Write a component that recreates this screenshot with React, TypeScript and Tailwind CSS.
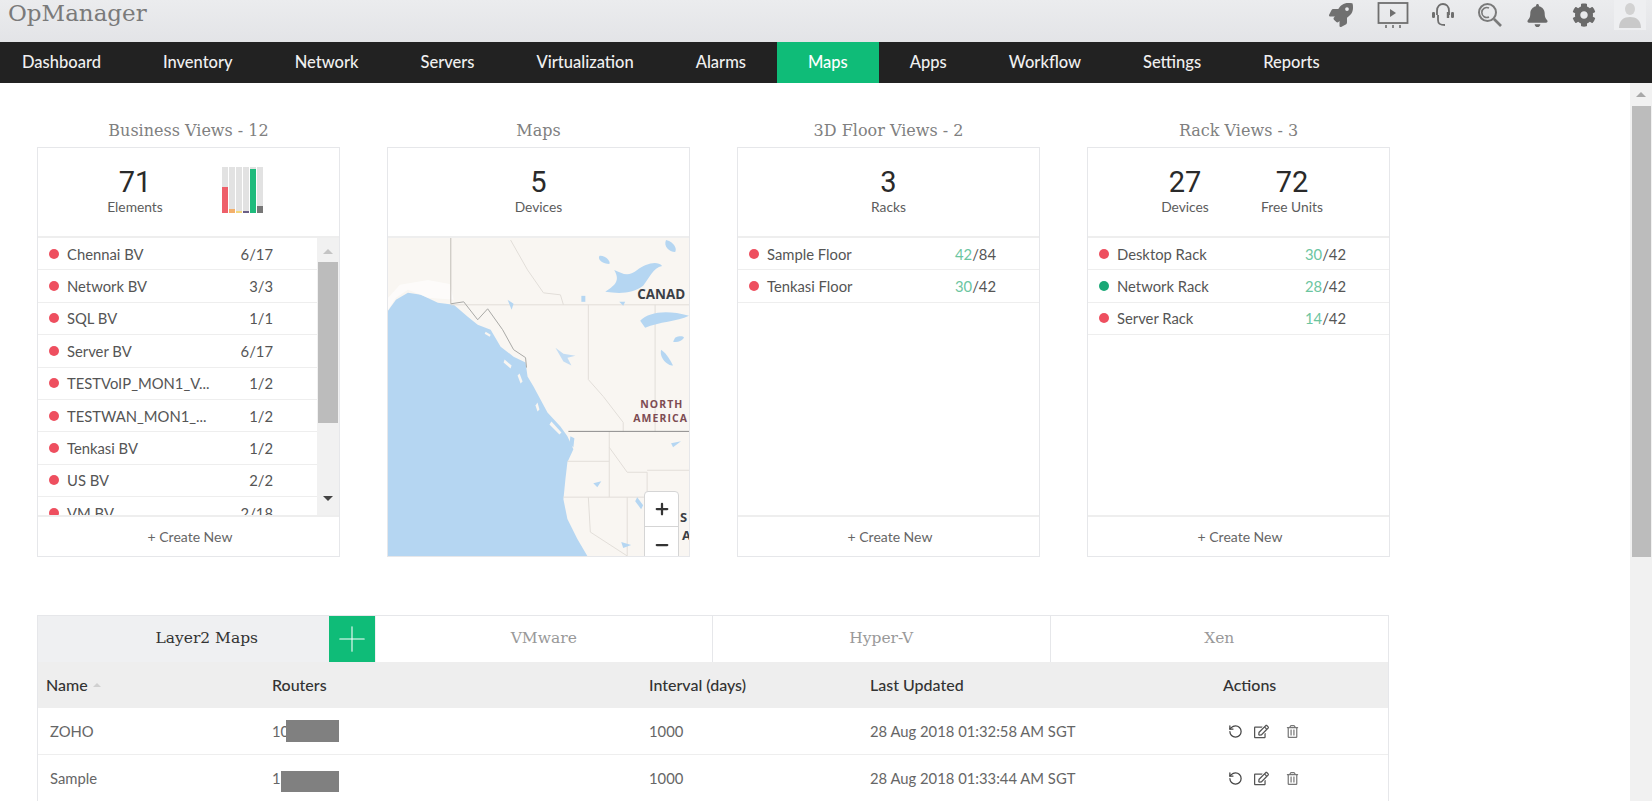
import { Minus, Plus, RotateCcw } from 'lucide-react';
import { FaBell, FaCog, FaRegEdit, FaRegTrashAlt, FaRocket } from 'react-icons/fa';

const navItems = ['Dashboard', 'Inventory', 'Network', 'Servers', 'Virtualization', 'Alarms', 'Maps', 'Apps', 'Workflow', 'Settings', 'Reports'];

const businessViews = [
  { name: 'Chennai BV', count: '6/17' },
  { name: 'Network BV', count: '3/3' },
  { name: 'SQL BV', count: '1/1' },
  { name: 'Server BV', count: '6/17' },
  { name: 'TESTVoIP_MON1_V...', count: '1/2' },
  { name: 'TESTWAN_MON1_...', count: '1/2' },
  { name: 'Tenkasi BV', count: '1/2' },
  { name: 'US BV', count: '2/2' },
  { name: 'VM BV', count: '2/18' },
];

const floorViews = [
  { name: 'Sample Floor', used: '42', total: '/84', ok: false },
  { name: 'Tenkasi Floor', used: '30', total: '/42', ok: false },
];

const rackViews = [
  { name: 'Desktop Rack', used: '30', total: '/42', ok: false },
  { name: 'Network Rack', used: '28', total: '/42', ok: true },
  { name: 'Server Rack', used: '14', total: '/42', ok: false },
];

const layerMaps = [
  { name: 'ZOHO', router: '10', mask: 'w-[53px] left-[14px] top-[12px] h-[22px]', updated: '28 Aug 2018 01:32:58 AM SGT' },
  { name: 'Sample', router: '1', mask: 'w-[58px] left-[9px] top-[16px] h-[21px]', updated: '28 Aug 2018 01:33:44 AM SGT' },
];

const chartBars = [
  { fill: 'h-[26px] bg-[#ee5f6a]' },
  { fill: 'h-[4px] bg-[#f3b06b]' },
  { fill: 'h-[2px] bg-[#f2d77e]' },
  { fill: 'h-[2px] bg-[#6b5f86]' },
  { fill: 'h-[44px] bg-[#1fbb7c]' },
  { fill: 'h-[7px] bg-[#777777]' },
];

function Stat({ value, label }: { value: string; label: string }) {
  return (
    <div className="w-[107px] flex flex-col items-center">
      <span className="font-['Roboto'] text-[29px] leading-[36px] text-[#2a2a2a]">{value}</span>
      <span className="text-[13.8px] leading-[18px] text-[#5c5c5c] -mt-[2px]">{label}</span>
    </div>
  );
}

function Card({ title, stats, children }: { title: string; stats: React.ReactNode; children: React.ReactNode }) {
  return (
    <div>
      <h3 className="h-[28px] mb-[3px] pt-[2px] flex items-center justify-center font-['DejaVu_Serif'] text-[16px] text-[#808080]">{title}</h3>
      <div className="h-[410px] border border-[#e6e7ea] flex flex-col">
        <div className="h-[90px] shrink-0 flex items-start justify-center pt-[16px] border-b-2 border-[#eeeeee]">{stats}</div>
        {children}
      </div>
    </div>
  );
}

function Footer() {
  return (
    <div className="h-[41px] shrink-0 border-t-2 border-[#eeeeee] flex items-center justify-center pl-[3px] text-[14px] text-[#666]">+ Create New</div>
  );
}

function RatioList({ rows }: { rows: { name: string; used: string; total: string; ok: boolean }[] }) {
  return (
    <div className="flex-1">
      {rows.map((row) => (
        <div key={row.name} className="h-[32.4px] flex items-center pl-[11px] pr-[43px] border-b border-[#eeeeee] text-[14.8px] text-[#555]">
          <span className={`w-[10px] h-[10px] rounded-full ${row.ok ? 'bg-[#1aa876]' : 'bg-[#ee4f5f]'}`} />
          <span className="ml-[8px] flex-1">{row.name}</span>
          <span>
            <span className="text-[#6cc5a0]">{row.used}</span>
            {row.total}
          </span>
        </div>
      ))}
    </div>
  );
}

function MapPanel() {
  return (
    <div className="relative flex-1 overflow-hidden bg-[#f9f6f2]">
      <svg viewBox="0 0 302 319" className="w-full h-full block" fill="none">
        {/* ocean */}
        <path
          fill="#b5d6f2"
          d="M0 73 L8 62 L20 55 L33 57 L50 65 L66 67 L80 79 L90 87 L103 92 L113 109 L126 119 L138 125 L140 139 L146 149 L153 162 L160 175 L173 189 L180 199 L186 212 L180 225 L178 242 L176 262 L180 282 L190 302 L200 319 L0 319 Z"
        />
        <path fill="#ffffff" d="M0 60 L12 47 L40 42 L62 46 L66 62 L40 60 L20 52 L8 60 L0 72 Z" opacity="0.6" />
        {/* land borders */}
        <g stroke="#e2ded9" strokeWidth="1">
          <path d="M63 67 L302 67" />
          <path d="M123 2 L140 32 L156 55 L173 57 L176 67" />
          <path d="M201 67 L201 142 L216 159 L236 185 L236 194" />
          <path d="M268 67 L268 194" />
          <path d="M222 194 L222 260 M180 224 L222 224 M222 210 L240 235 L260 235 L260 262 M260 233 L302 233" />
          <path d="M176 260 L260 260 M201 260 L203 295 L240 319 M240 260 L240 319" />
        </g>
        <path d="M63 0 L63 66" stroke="#c2beb8" strokeWidth="1" />
        <path d="M63 66 L76 64 L90 82 L100 71 L115 92 L126 112 L138 120 L139 130" stroke="#a9a9a6" strokeWidth="1" />
        <path d="M181 194 L302 194" stroke="#8b8b8b" strokeWidth="1" />
        {/* coast islands */}
        <g fill="#f9f6f2">
          <path d="M98 94 L103 97 L102 99 L97 96 Z" />
          <path d="M117 122 L124 128 L123 131 L116 125 Z" />
          <path d="M132 136 L135 144 L133 146 L130 138 Z" />
          <path d="M150 165 L152 172 L150 174 L148 168 Z" />
          <path d="M164 184 L174 195 L172 197 L162 187 Z" />
          <path d="M183 199 L187 201 L186 210 L182 207 Z" fill="#b5d6f2" />
        </g>
        {/* lakes */}
        <g fill="#b5d6f2">
          <path d="M227 32 C235 35 240 40 250 32 C258 26 270 22 275 28 C266 30 262 40 256 48 C246 56 232 56 218 54 C226 48 234 44 227 32 Z" />
          <path d="M212 18 C218 17 224 24 222 26 C216 26 210 22 212 18 Z" />
          <path d="M279 2 C288 4 290 12 288 14 C282 14 276 8 279 2 Z" />
          <path d="M253 83 C262 74 280 72 302 78 C290 84 272 84 258 90 Z" />
          <path d="M288 100 C292 98 296 98 297 100 C294 104 290 105 286 104 Z" />
          <path d="M274 112 C280 116 284 124 286 128 C280 128 272 120 274 112 Z" />
          <path d="M168 110 L176 116 L188 118 L180 120 L184 128 L176 124 Z" opacity="0.8" />
          <path d="M120 62 L126 66 L124 72 Z" />
          <path d="M194 58 L198 58 L198 64 L194 64 Z" />
          <path d="M232 64 L238 64 L236 68 Z" />
          <path d="M284 206 L294 204 L286 210 Z" />
          <path d="M250 260 L256 268 L254 272 L248 264 Z" />
          <path d="M234 305 L244 308 L236 311 Z" />
          <path d="M206 246 L214 244 L210 250 Z" />
        </g>
        <text x="250" y="61" fontFamily="Open Sans" fontSize="13.5" fontWeight="700" fill="#3b3f46">CANAD</text>
        <g fontFamily="Open Sans" fontSize="10.5" fontWeight="700" fill="#7d4c52" letterSpacing="1.1">
          <text x="253" y="171">NORTH</text>
          <text x="246" y="185">AMERICA</text>
        </g>
        <g fontFamily="Open Sans" fontSize="13" fontWeight="700" fill="#3b3f46">
          <text x="293" y="285">S</text>
          <text x="295" y="303">A</text>
        </g>
      </svg>
      <div className="absolute left-[256px] top-[253px] w-[35px] h-[72px] bg-white border border-[#d5d5d5] rounded-[4px] flex flex-col">
        <div className="h-[35px] flex items-center justify-center border-b border-[#d5d5d5]">
          <Plus size={18} strokeWidth={3} className="text-[#333]" />
        </div>
        <div className="h-[35px] flex items-center justify-center">
          <Minus size={18} strokeWidth={3} className="text-[#333]" />
        </div>
      </div>
    </div>
  );
}

function MonitorPlayIcon() {
  return (
    <svg width="32" height="28" viewBox="0 0 32 28" fill="none" className="text-[#6f6f6f]">
      <rect x="1.5" y="2" width="29" height="20" stroke="currentColor" strokeWidth="1.8" />
      <path d="M13 8 L19 12 L13 16 Z" fill="currentColor" />
      <path d="M9 24 V27 M16 24 V27 M23 24 V27" stroke="currentColor" strokeWidth="1.6" />
    </svg>
  );
}

function HeadsetIcon() {
  return (
    <svg width="24" height="26" viewBox="0 0 24 26" fill="none" className="text-[#6f6f6f]">
      <path d="M6 13 V9 C6 4 9 2 12 2 C15 2 18 4 18 9 V13" stroke="currentColor" strokeWidth="1.8" />
      <rect x="1" y="10" width="3" height="6" rx="1.2" fill="currentColor" />
      <rect x="20" y="10" width="3" height="6" rx="1.2" fill="currentColor" />
      <path d="M7 13 V18 C7 22 9 23 14 23" stroke="currentColor" strokeWidth="1.8" />
      <path d="M17 10 V16" stroke="currentColor" strokeWidth="2.4" />
    </svg>
  );
}

function SearchCircleIcon() {
  return (
    <svg width="26" height="26" viewBox="0 0 26 26" fill="none" className="text-[#7a7a7a]">
      <circle cx="10.5" cy="10.5" r="8.5" stroke="currentColor" strokeWidth="2" />
      <path d="M12 6 A5 5 0 1 0 12 15" stroke="currentColor" strokeWidth="1.6" />
      <path d="M17 17 L24 24" stroke="currentColor" strokeWidth="2.6" />
    </svg>
  );
}

function AvatarIcon() {
  return (
    <div className="w-[32px] h-[30px] bg-[#eeeff1] flex items-center justify-center">
      <svg width="26" height="28" viewBox="0 0 26 28" fill="#c9c9c9">
        <ellipse cx="13" cy="8" rx="5" ry="6" fill="#d2d2d2" />
        <path d="M2 27 C2 19 7 16 13 16 C19 16 24 19 24 27 Z" />
      </svg>
    </div>
  );
}

export default function App() {
  return (
    <div className="h-[801px] overflow-hidden flex flex-col bg-white font-['Lato'] text-[#555]">
      {/* Header */}
      <div className="h-[42px] shrink-0 bg-gradient-to-b from-[#ebecee] to-[#e3e4e7] flex items-start pl-[8px] pr-[6px]">
        <span className="font-['DejaVu_Serif'] text-[23px] leading-[26px] text-[#7a7a7a]">OpManager</span>
        <div className="ml-auto flex items-center h-[30px] text-[#6f6f6f]">
          <FaRocket size={24} className="mr-[24px] text-[#707070]" />
          <MonitorPlayIcon />
          <div className="ml-[22px]"><HeadsetIcon /></div>
          <div className="ml-[22px]"><SearchCircleIcon /></div>
          <FaBell size={23} className="ml-[23px] text-[#6a6a6a]" />
          <FaCog size={24} className="ml-[23px] text-[#6a6a6a]" />
          <div className="ml-[18px]"><AvatarIcon /></div>
        </div>
      </div>

      {/* Nav */}
      <div className="h-[41px] shrink-0 bg-[#222222] flex">
        <div className="flex -ml-[9px]">
          {navItems.map((item) => (
            <div
              key={item}
              className={`px-[31px] flex items-center text-[16.5px] font-medium ${item === 'Maps' ? 'bg-[#0fbc78] text-white' : 'text-[#f0f0f0]'}`}
            >
              {item}
            </div>
          ))}
        </div>
      </div>

      <div className="flex-1 min-h-0 flex">
        {/* Content */}
        <div className="flex-1 min-w-0 pl-[37px] pt-[33px]">
          <div className="w-[1352px]">
            <div className="grid grid-cols-[303px_303px_303px_303px] gap-x-[47px]">
              <Card
                title="Business Views - 12"
                stats={
                  <>
                    <Stat value="71" label="Elements" />
                    <div className="w-[107px] flex justify-center pt-[3px]">
                      <div className="flex gap-[1px] h-[46px]">
                        {chartBars.map((bar, i) => (
                          <div key={i} className="w-[6px] h-full bg-[#e2e2e2] flex items-end">
                            <div className={`w-full ${bar.fill}`} />
                          </div>
                        ))}
                      </div>
                    </div>
                  </>
                }
              >
                <div className="relative flex-1 overflow-hidden flex">
                  <div className="flex-1">
                    {businessViews.map((row) => (
                      <div key={row.name} className="h-[32.4px] flex items-center pl-[11px] pr-[66px] border-b border-[#eeeeee] text-[14.8px] text-[#555]">
                        <span className="w-[10px] h-[10px] rounded-full bg-[#ee4f5f]" />
                        <span className="ml-[8px] flex-1">{row.name}</span>
                        <span>{row.count}</span>
                      </div>
                    ))}
                  </div>
                  <div className="absolute right-0 top-0 bottom-0 w-[22px] bg-[#f1f1f1] flex flex-col items-center">
                    <span className="mt-[11px] w-0 h-0 border-x-[5px] border-x-transparent border-b-[5px] border-b-[#c4c4c4]" />
                    <div className="mt-[8px] w-[20px] h-[161px] bg-[#bcbcbc]" />
                    <span className="mt-[73px] w-0 h-0 border-x-[5px] border-x-transparent border-t-[5px] border-t-[#444]" />
                  </div>
                </div>
                <Footer />
              </Card>

              <Card title="Maps" stats={<Stat value="5" label="Devices" />}>
                <MapPanel />
              </Card>

              <Card title="3D Floor Views - 2" stats={<Stat value="3" label="Racks" />}>
                <RatioList rows={floorViews} />
                <Footer />
              </Card>

              <Card
                title="Rack Views - 3"
                stats={
                  <>
                    <Stat value="27" label="Devices" />
                    <Stat value="72" label="Free Units" />
                  </>
                }
              >
                <RatioList rows={rackViews} />
                <Footer />
              </Card>
            </div>

            {/* Layer2 table */}
            <div className="mt-[58px] border-x border-t border-[#e6e7ea]">
              <div className="h-[46px] grid grid-cols-4 font-['DejaVu_Serif'] text-[15.5px]">
                <div className="relative bg-[#eff0f2] flex items-center justify-center text-[#333]">
                  Layer2 Maps
                  <div className="absolute right-[1px] top-0 bottom-0 w-[46px] bg-[#0fbc78] flex items-center justify-center">
                    <Plus size={42} strokeWidth={0.6} className="text-white" />
                  </div>
                </div>
                <div className="flex items-center justify-center text-[#999] border-r border-[#e6e7ea]">VMware</div>
                <div className="flex items-center justify-center text-[#999] border-r border-[#e6e7ea]">Hyper-V</div>
                <div className="flex items-center justify-center text-[#999]">Xen</div>
              </div>
              <div className="h-[46px] bg-[#eeeeee] flex items-center text-[16px] font-medium text-[#333]">
                <div className="w-[234px] pl-[8px] flex items-center gap-[5px]">
                  Name
                  <span className="w-0 h-0 border-x-[4px] border-x-transparent border-b-[4px] border-b-[#d0d0d0]" />
                </div>
                <div className="w-[377px]">Routers</div>
                <div className="w-[221px]">Interval (days)</div>
                <div className="w-[353px]">Last Updated</div>
                <div>Actions</div>
              </div>
              {layerMaps.map((row) => (
                <div key={row.name} className="h-[47px] flex items-center border-b border-[#eeeeee] text-[14.8px] text-[#666]">
                  <div className="w-[234px] pl-[12px]">{row.name}</div>
                  <div className="relative w-[377px] h-full flex items-center">
                    {row.router}
                    <div className={`absolute bg-[#808080] ${row.mask}`} />
                  </div>
                  <div className="w-[221px]">1000</div>
                  <div className="w-[353px]">{row.updated}</div>
                  <div className="flex items-center text-[#555]">
                    <RotateCcw size={15} strokeWidth={2} className="ml-[5px] text-[#444]" />
                    <FaRegEdit size={15} className="ml-[11px]" />
                    <FaRegTrashAlt size={13} className="ml-[17px] text-[#777]" />
                  </div>
                </div>
              ))}
            </div>
          </div>
        </div>

        {/* Page scrollbar */}
        <div className="w-[22px] shrink-0 bg-[#f1f1f1] flex flex-col items-center">
          <span className="mt-[9px] w-0 h-0 border-x-[5px] border-x-transparent border-b-[5px] border-b-[#a8a8a8]" />
          <div className="mt-[9px] w-[19px] h-[451px] bg-[#bcbcbc]" />
        </div>
      </div>
    </div>
  );
}
